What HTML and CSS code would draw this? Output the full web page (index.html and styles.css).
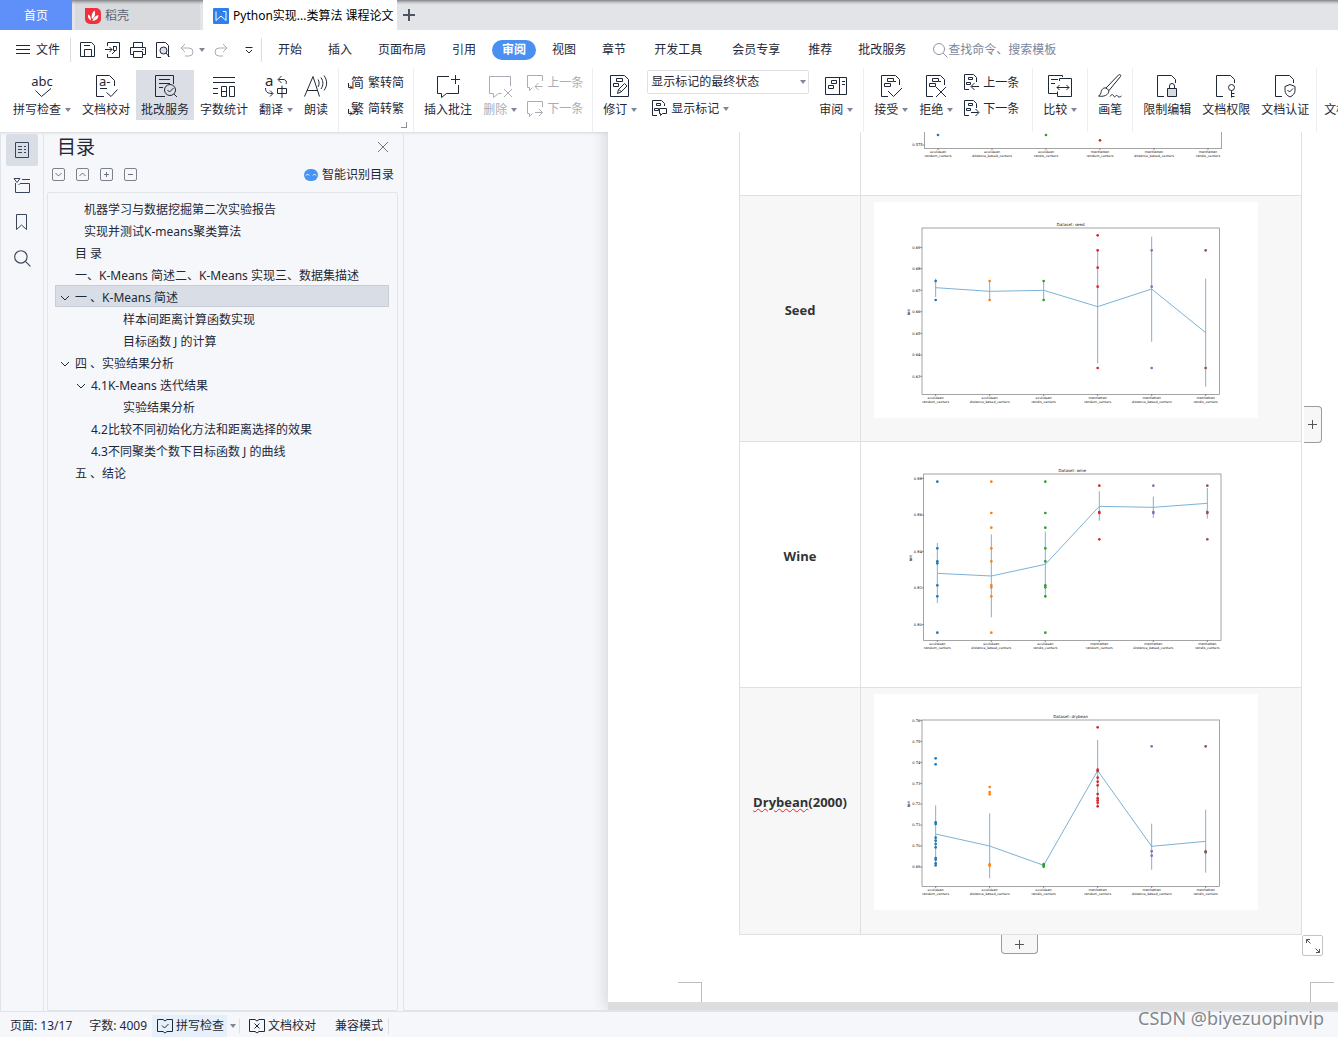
FILE: index.html
```html
<!DOCTYPE html>
<html lang="zh-CN">
<head>
    <meta charset="UTF-8">
    <meta name="viewport" content="width=device-width, initial-scale=1.0">
    <title>Python实现...类算法 课程论文</title>
    <link rel="stylesheet" href="styles.css">
</head>
<body>
    <svg class="sprite" aria-hidden="true">
        <symbol id="caret" viewBox="0 0 6 4"><path d="M0 0h6L3 4z" fill="#7f8796" stroke="none"/></symbol>
        <symbol id="doc" viewBox="0 0 24 24"><path d="M9 22.500H2.500v-21h14l4 4V9"/></symbol>
        <symbol id="doc-marks" viewBox="0 0 24 24"><path d="M9 22.500H2.500v-21h14l4 4V11M8.500 4.500h6v3h-6zM5.500 9.500h6v3h-6zM15 7.500h2"/></symbol>
        <symbol id="doc-small" viewBox="0 0 18 18"><path d="M6 15.500H1.500v-15h9l3 3V8M5.500 3.500h4v2h-4zM3.500 8.500h4v2h-4z"/></symbol>
        <symbol id="arrow-left" viewBox="0 0 18 18"><path d="M16 12.500H8.500M11.500 9l-3.500 3.500 3.500 3.500"/></symbol>
        <symbol id="arrow-right" viewBox="0 0 18 18"><path d="M8 12.500h7.500M12.500 9l3.500 3.500-3.500 3.500"/></symbol>
        <symbol id="chevron" viewBox="0 0 10 10"><path d="M1 3l4 4 4-4"/></symbol>
        <symbol id="magnifier" viewBox="0 0 16 16"><circle cx="7" cy="7" r="5.500"/><path d="M11 11l4.500 4.500"/></symbol>
    </svg>

    <header>
        <nav class="tab-strip" aria-label="文档标签">
            <a href="#" class="tab tab-home">首页</a>
            <a href="#" class="tab tab-docer">
                <svg width="16" height="16" viewBox="0 0 16 16"><path d="M0 0h11a5 5 0 0 1 5 5v6a5 5 0 0 1-5 5H5a5 5 0 0 1-5-5z" fill="#f0303c" stroke="none"/><path d="M9.500 2.500c1.500 3 .5 6.500-2.500 8.500-1-3 0-6.500 2.500-8.500zM3 6.500c2 .5 3 3 3 6C4 11.500 2.500 9.500 3 6.500zM13.500 7c0 3.500-2 5.500-6 6 .5-3 3-5.500 6-6z" fill="#fff" stroke="none"/></svg>
                稻壳
            </a>
            <a href="#" class="tab tab-active">
                <svg width="16" height="16" viewBox="0 0 16 16"><rect width="16" height="16" rx="1" fill="#2f80ea" stroke="none"/><path d="M3 3.500v9l5-4.500 5 4.500v-9h-3" stroke="#fff"/></svg>
                Python实现...类算法 课程论文
            </a>
            <button type="button" class="new-tab" aria-label="新建标签"><svg width="12" height="12" viewBox="0 0 12 12"><path d="M6 0v12M0 6h12" stroke-width="2"/></svg></button>
        </nav>

        <div class="menu-bar">
            <button type="button" class="file-btn">
                <svg width="14" height="12" viewBox="0 0 14 12"><path d="M0 1.500h14M0 5.500h14M0 9.500h14"/></svg>
                文件
            </button>
            <div class="quick-bar">
                <button type="button" aria-label="保存"><svg width="16" height="16" viewBox="0 0 16 16"><path d="M.5.500h11l3 3v11H.5zM4.500 14V7.500h7V14M4 3.500h6"/></svg></button>
                <button type="button" aria-label="输出为PDF"><svg width="16" height="16" viewBox="0 0 16 16"><path d="M2.500 4V.5h12v15h-12V12M0 7.500h7M4.500 5L7 7.500 4.500 10M8 4.500h3.500v3L7 12M8.500 4.500v4h3"/></svg></button>
                <button type="button" aria-label="打印"><svg width="16" height="16" viewBox="0 0 16 16"><path d="M3.500 5V.5h9V5M3 12.500H.5v-7h15v7H13M3.500 9.500h9v6h-9zM12 7.500h1.500"/></svg></button>
                <button type="button" aria-label="打印预览"><svg width="16" height="16" viewBox="0 0 16 16"><path d="M6 15.500H1.500V.5h9l3 3V15"/><circle cx="8.500" cy="8.500" r="3.500" fill="#dde0e6"/><path d="M11 11l3.500 4"/></svg></button>
                <div class="undo">
                    <button type="button" class="off" aria-label="撤销"><svg width="14" height="14" viewBox="0 0 14 14"><path d="M5 1L1 5l4 4M1.500 5H9a4 4 0 0 1 0 8H5"/></svg></button>
                    <button type="button" aria-label="撤销列表"><svg class="caret"><use href="#caret"/></svg></button>
                </div>
                <button type="button" class="off redo" aria-label="恢复"><svg width="14" height="14" viewBox="0 0 14 14"><path d="M9 1l4 4-4 4M12.500 5H5a4 4 0 0 0 0 8h4"/></svg></button>
                <button type="button" aria-label="自定义"><svg width="8" height="8" viewBox="0 0 8 8"><path d="M.5 1.500h7M1 4l3 3 3-3"/></svg></button>
            </div>
            <nav class="menus" aria-label="功能区">
                <a href="#">开始</a>
                <a href="#">插入</a>
                <a href="#">页面布局</a>
                <a href="#">引用</a>
                <a href="#" class="current">审阅</a>
                <a href="#">视图</a>
                <a href="#">章节</a>
                <a href="#" class="roomy">开发工具</a>
                <a href="#" class="roomy">会员专享</a>
                <a href="#">推荐</a>
                <a href="#">批改服务</a>
            </nav>
            <label class="search">
                <svg width="16" height="16"><use href="#magnifier"/></svg>
                <input type="text" placeholder="查找命令、搜索模板" aria-label="查找命令、搜索模板">
            </label>
        </div>

        <div class="ribbon">
            <div class="group">
                <button type="button" class="tool">
                    <svg width="24" height="24" viewBox="0 0 24 24"><text x="12" y="12" font-size="13" text-anchor="middle">abc</text><path d="M5.500 16.500l6 6 9.500-8"/></svg>
                    <span>拼写检查<svg class="caret"><use href="#caret"/></svg></span>
                </button>
                <button type="button" class="tool">
                    <svg width="24" height="24" viewBox="0 0 24 24"><path d="M10 22.500H2.500v-21h13l5 5V12M6 14.500h7M12.500 18.500l4.500 4 6.500-7"/><text x="5" y="12" font-size="13">a-</text></svg>
                    <span>文档校对</span>
                </button>
                <button type="button" class="tool pressed">
                    <svg width="24" height="24" viewBox="0 0 24 24"><path d="M12 22.500H2.500v-21h18V10M6 5.500h11M6 9.500h11M6 13.500h4"/><circle cx="17" cy="16" r="5.500"/><path d="M14.500 16l2 2 4-4M21 20l3 3"/></svg>
                    <span>批改服务</span>
                </button>
                <button type="button" class="tool">
                    <svg width="24" height="24" viewBox="0 0 24 24"><path d="M1 3.500h22M1 8.500h22M1 14.500h5M1 19.500h5M9.500 12.500h5v10h-5zM9.500 17.500h5M17.500 12.500h5v10h-5z"/></svg>
                    <span>字数统计</span>
                </button>
                <button type="button" class="tool">
                    <svg width="24" height="24" viewBox="0 0 24 24"><text x="1" y="12" font-size="15">a</text><path d="M17.500 2l-3.500 3.500L17.500 9M14.500 5.500H19a3 3 0 0 1 3 4.500M1.500 14c0 4 2 5.500 7 5.500M6 16.500l3 3-3 3M13.500 14.500h9v5h-9zM18 11.500V24"/></svg>
                    <span>翻译<svg class="caret"><use href="#caret"/></svg></span>
                </button>
                <button type="button" class="tool">
                    <svg width="24" height="24" viewBox="0 0 24 24"><path d="M.5 22.500L9 2.500l6.500 20M3 16.500h10.500M14 5.500c1.500 2.500 1.500 5 0 7.500M17 3.500c2.500 4 2.500 7.500 0 11.500M20 1.500c3.500 5 3.500 10 0 15"/></svg>
                    <span>朗读</span>
                </button>
            </div>
            <div class="group corner">
                <div class="tool-list">
                    <button type="button" class="tool-small"><svg width="16" height="18" viewBox="0 0 16 18"><text x="3" y="13" font-size="13">简</text><path d="M.5 9v4.500H4M2 11.500l2 2-2 2"/></svg>繁转简</button>
                    <button type="button" class="tool-small"><svg width="16" height="18" viewBox="0 0 16 18"><text x="3" y="13" font-size="13">繁</text><path d="M.5 9v4.500H4M2 11.500l2 2-2 2"/></svg>简转繁</button>
                </div>
            </div>
            <div class="group">
                <button type="button" class="tool">
                    <svg width="24" height="24" viewBox="0 0 24 24"><path d="M13 2.500H1.500v17h4v4l5-4h12V11M19.500 1v9M15 5.500h9"/></svg>
                    <span>插入批注</span>
                </button>
                <button type="button" class="tool off">
                    <svg width="24" height="24" viewBox="0 0 24 24"><path d="M22.500 12V2.500h-21v17h4v4l5-4h3M16 15l8 8M24 15l-8 8"/></svg>
                    <span>删除<svg class="caret"><use href="#caret"/></svg></span>
                </button>
                <div class="tool-list">
                    <button type="button" class="tool-small off"><svg width="16" height="18" viewBox="0 0 16 18"><path d="M15.500 7V1.500H.5v12h2v3l3-3M15.500 12.500H8M11.500 9L8 12.500l3.500 3.500"/></svg>上一条</button>
                    <button type="button" class="tool-small off"><svg width="16" height="18" viewBox="0 0 16 18"><path d="M15.500 7V1.500H.5v12h2v3l3-3M8 12.500h7.500M12 9l3.500 3.500L12 16"/></svg>下一条</button>
                </div>
            </div>
            <div class="group">
                <button type="button" class="tool">
                    <svg width="24" height="24" viewBox="0 0 24 24"><path d="M2.500 1.500h14l4 4v17h-18zM8.500 4.500h6v3h-6zM5.500 9.500h5v3h-5zM9.500 19.500l1-4 6-6 2.500 2.500-6 6zM11 15.500l2.500 2.500"/></svg>
                    <span>修订<svg class="caret"><use href="#caret"/></svg></span>
                </button>
                <div class="tool-list">
                    <div class="picker">
                        <select aria-label="标记显示状态">
                            <option>显示标记的最终状态</option>
                            <option>最终状态</option>
                            <option>原始状态</option>
                        </select>
                        <svg class="caret"><use href="#caret"/></svg>
                    </div>
                    <button type="button" class="tool-small markup"><svg width="16" height="18" viewBox="0 0 16 18"><path d="M6 15.500H1.500v-15h9l3 3V6M5.500 3.500h4v2h-4zM3.500 8.500h4v2h-4zM8.500 8.500h7v5h-4l-2 2v-2h-1z"/></svg>显示标记<svg class="caret"><use href="#caret"/></svg></button>
                </div>
                <button type="button" class="tool">
                    <svg width="24" height="24" viewBox="0 0 24 24"><path d="M1.500 3.500h21v17h-21zM15.500 3.500v17M18 7.500h3M18 10.500h3M7.500 6.500h5v3h-5zM4.500 11.500h5v3h-5z"/></svg>
                    <span>审阅<svg class="caret"><use href="#caret"/></svg></span>
                </button>
            </div>
            <div class="group wide">
                <button type="button" class="tool">
                    <svg width="24" height="24" viewBox="0 0 24 24"><use href="#doc-marks"/><path d="M9 17l5.500 5.500L23 14"/></svg>
                    <span>接受<svg class="caret"><use href="#caret"/></svg></span>
                </button>
                <button type="button" class="tool">
                    <svg width="24" height="24" viewBox="0 0 24 24"><use href="#doc-marks"/><path d="M12 13l10 10M22 13L12 23"/></svg>
                    <span>拒绝<svg class="caret"><use href="#caret"/></svg></span>
                </button>
                <div class="tool-list">
                    <button type="button" class="tool-small"><svg width="16" height="18" viewBox="0 0 16 18"><use href="#doc-small" width="18" height="18"/><use href="#arrow-left" width="18" height="18"/></svg>上一条</button>
                    <button type="button" class="tool-small"><svg width="16" height="18" viewBox="0 0 16 18"><use href="#doc-small" width="18" height="18"/><use href="#arrow-right" width="18" height="18"/></svg>下一条</button>
                </div>
            </div>
            <div class="group">
                <button type="button" class="tool">
                    <svg width="24" height="24" viewBox="0 0 24 24"><path d="M14.500 3V1.500H.5v18h9M3 5.500h7M3 9.500h4M11.500 7V4.500h12v18h-14v-5M9 13.500h12M11.500 11L9 13.500l2.500 2.500M18.500 11l2.500 2.500-2.500 2.500"/></svg>
                    <span>比较<svg class="caret"><use href="#caret"/></svg></span>
                </button>
            </div>
            <div class="group">
                <button type="button" class="tool">
                    <svg width="24" height="24" viewBox="0 0 24 24"><path d="M8 14L20.500 1c1.500-1 3 0 2 1.500L11 16.500zM8 14c-3-.5-4.500 1.500-5 4.500-.3 2-1.500 3-2.500 3.500 5 1 10-.5 10.500-5.500M12 22.500c1.500-2.500 3-2.500 4 0 1 1.500 2.500-3 4 0 1 1 2 .5 3.500-.5"/></svg>
                    <span>画笔</span>
                </button>
            </div>
            <div class="group snug">
                <button type="button" class="tool">
                    <svg width="24" height="24" viewBox="0 0 24 24"><use href="#doc"/><path d="M12.500 14.500h9v8h-9z" fill="#d8dbe2"/><path d="M14.500 14v-2a2.500 2.500 0 0 1 5 0v2"/></svg>
                    <span>限制编辑</span>
                </button>
                <button type="button" class="tool">
                    <svg width="24" height="24" viewBox="0 0 24 24"><use href="#doc"/><circle cx="17.500" cy="13.500" r="3"/><path d="M17.500 16.500v7M17.500 19.500h3M17.500 22.500h3"/></svg>
                    <span>文档权限</span>
                </button>
                <button type="button" class="tool">
                    <svg width="24" height="24" viewBox="0 0 24 24"><use href="#doc"/><path d="M17 10.500l5 2v4c0 3-2 5-5 6.500-3-1.500-5-3.500-5-6.500v-4zM14.500 16l2 2 3.500-3.500"/></svg>
                    <span>文档认证</span>
                </button>
            </div>
            <div class="group">
                <button type="button" class="tool">
                    <svg width="24" height="24"><use href="#doc"/></svg>
                    <span>文档定稿</span>
                </button>
            </div>
        </div>
    </header>

    <main class="workspace">
        <nav class="rail" aria-label="侧边栏">
            <button type="button" class="selected" aria-label="目录"><svg width="16" height="18" viewBox="0 0 16 18"><path d="M1.500 1.500h13v15h-13zM4 5.500h4M4 8.500h4M4 11.500h4M10 5.500h2M10 8.500h2M10 11.500h2"/></svg></button>
            <button type="button" aria-label="章节"><svg width="18" height="18" viewBox="0 0 18 18"><path d="M1 1.500h6L4 5.500zM9 2.500h8M2.500 6v9.500h14v-9H7L5.500 8"/></svg></button>
            <button type="button" aria-label="书签"><svg width="14" height="18" viewBox="0 0 14 18"><path d="M1.500 1.500h10v15l-5-4.500-5 4.500z"/></svg></button>
            <button type="button" aria-label="查找"><svg width="18" height="18"><use href="#magnifier"/></svg></button>
        </nav>

        <aside class="outline">
            <div class="outline-head">
                <h1>目录</h1>
                <button type="button" aria-label="关闭"><svg width="10" height="10" viewBox="0 0 10 10"><path d="M0 0l10 10M10 0L0 10"/></svg></button>
            </div>
            <div class="outline-tools">
                <button type="button" class="box" aria-label="展开"><svg width="9" height="9" viewBox="0 0 9 9"><path d="M1.500 3l3 3 3-3"/></svg></button>
                <button type="button" class="box" aria-label="收起"><svg width="9" height="9" viewBox="0 0 9 9"><path d="M1.500 6l3-3 3 3"/></svg></button>
                <button type="button" class="box" aria-label="增加"><svg width="5" height="5" viewBox="0 0 5 5"><path d="M2.500 0v5M0 2.500h5"/></svg></button>
                <button type="button" class="box" aria-label="减少"><svg width="5" height="5" viewBox="0 0 5 5"><path d="M0 2.500h5"/></svg></button>
                <a href="#" class="smart">
                    <svg width="14" height="12" viewBox="0 0 14 12"><rect width="14" height="12" rx="6" fill="#4795f2" stroke="none"/><path d="M2 6.500l1.500-1.500L5 6.500M9 6.500l1.500-1.500L12 6.500" stroke="#fff"/></svg>
                    智能识别目录
                </a>
            </div>
            <ul class="tree">
                <li class="lead">机器学习与数据挖掘第二次实验报告</li>
                <li class="lead">实现并测试K-means聚类算法</li>
                <li>目 录</li>
                <li>一、K-Means 简述二、K-Means 实现三、数据集描述</li>
                <li class="chosen"><svg><use href="#chevron"/></svg>一 、K-Means 简述</li>
                <li class="level3">样本间距离计算函数实现</li>
                <li class="level3">目标函数 J 的计算</li>
                <li><svg><use href="#chevron"/></svg>四 、实验结果分析</li>
                <li class="level2"><svg><use href="#chevron"/></svg>4.1K-Means 迭代结果</li>
                <li class="level3">实验结果分析</li>
                <li class="level2">4.2比较不同初始化方法和距离选择的效果</li>
                <li class="level2">4.3不同聚类个数下目标函数 J 的曲线</li>
                <li>五 、结论</li>
            </ul>
        </aside>

        <section class="canvas">
            <div class="sheet-stack">
                <article class="sheet">
                    <div class="table-wrap">
                        <table>
                            <tbody>
                                <tr><th scope="row"></th><td><svg class="chart" data-chart="iris"></svg></td></tr>
                                <tr><th scope="row">Seed</th><td><svg class="chart" data-chart="seed"></svg></td></tr>
                                <tr><th scope="row">Wine</th><td><svg class="chart" data-chart="wine"></svg></td></tr>
                                <tr><th scope="row"><span class="misspelled">Drybean</span>(2000)</th><td><svg class="chart" data-chart="drybean"></svg></td></tr>
                            </tbody>
                        </table>
                        <button type="button" class="add-col" aria-label="添加列"><svg width="9" height="9" viewBox="0 0 9 9"><path d="M4.500 0v9M0 4.500h9"/></svg></button>
                        <button type="button" class="add-row" aria-label="添加行"><svg width="9" height="9" viewBox="0 0 9 9"><path d="M4.500 0v9M0 4.500h9"/></svg></button>
                        <button type="button" class="resize" aria-label="调整表格大小"><svg width="14" height="14" viewBox="0 0 14 14"><path d="M.5 4V.5H4M.5.5l4 4M13.500 10v3.500H10M13.500 13.500l-4-4"/></svg></button>
                    </div>
                    <div class="crop-marks"><i></i><i></i></div>
                </article>
            </div>
        </section>
    </main>

    <footer class="status">
        <span class="count">页面: 13/17</span>
        <span class="count">字数: 4009</span>
        <button type="button" class="spell"><svg width="16" height="14" viewBox="0 0 16 14"><path d="M6 .5H.5v12H6l2 1.500 2-1.500h5.500V.5H10L8 2zM5 6.500l2.500 2.500L11.500 5"/></svg>拼写检查</button>
        <button type="button" class="spell-menu" aria-label="拼写检查选项"><svg class="caret"><use href="#caret"/></svg></button>
        <button type="button" class="proof"><svg width="16" height="14" viewBox="0 0 16 14"><path d="M6 .5H.5v12H6l2 1.500 2-1.500h5.500V.5H10L8 2zM5.500 4.500l5 5M10.500 4.500l-5 5"/></svg>文档校对</button>
        <span class="mode">兼容模式</span>
    </footer>
    <div class="watermark">CSDN @biyezuopinvip</div>

    <script src="charts.js"></script>
</body>
</html>
```

FILE: charts.js
```js
// Every chart is drawn on a 1152 x 648 plot, the same shape as the exported figures
const COLORS = ['#1f77b4', '#ff7f0e', '#2ca02c', '#d62728', '#9467bd', '#8c564b'];
const LABELS = [
    ['eculidean', 'random_centers'],
    ['eculidean', 'distance_based_centers'],
    ['eculidean', 'randis_centers'],
    ['manhattan', 'random_centers'],
    ['manhattan', 'distance_based_centers'],
    ['manhattan', 'randis_centers']
];

// ticks: [label, y], mean: line points, bars: error bars, dots: samples per column
const charts = {
    iris: {
        left: 151,
        ticks: [['0.575', 567]],
        mean: [], bars: [],
        dots: [[537], [], [537], [553], [], []]
    },
    seed: {
        left: 144,
        ticks: [['0.69', 136], ['0.68', 200], ['0.67', 265], ['0.66', 329], ['0.65', 394], ['0.64', 459], ['0.63', 523]],
        mean: [257, 268, 265, 314, 261, 392],
        bars: [[230, 285], [238, 292], [238, 292], [145, 484], [104, 419], [230, 554]],
        dots: [[237, 294], [237, 294], [237, 294], [100, 145, 197, 254, 498], [145, 254, 498], [145, 498]]
    },
    wine: {
        left: 149,
        ticks: [['0.88', 91], ['0.86', 201], ['0.84', 311], ['0.82', 420], ['0.80', 530]],
        mean: [376, 384, 349, 175, 178, 166],
        bars: [[285, 465], [259, 508], [251, 449], [130, 218], [146, 210], [120, 212]],
        dots: [
            [101, 301, 340, 346, 412, 445, 554],
            [101, 195, 239, 301, 340, 412, 418, 445, 554],
            [101, 195, 239, 301, 340, 412, 418, 445, 554],
            [113, 192, 195, 274],
            [113, 192, 195],
            [113, 192, 195, 274]
        ]
    },
    drybean: {
        left: 144,
        ticks: [['0.76', 79], ['0.75', 142], ['0.74', 205], ['0.73', 268], ['0.72', 330], ['0.71', 393], ['0.70', 456], ['0.69', 519]],
        mean: [420, 456, 514, 230, 457, 442],
        bars: [[334, 510], [358, 553], [508, 518], [138, 336], [389, 527], [347, 536]],
        dots: [
            [193, 211, 385, 390, 431, 440, 450, 460, 492, 497, 508, 514],
            [279, 294, 301, 511, 515],
            [510, 514, 518],
            [100, 227, 231, 251, 263, 274, 300, 313, 319, 326, 337],
            [157, 472, 485],
            [157, 472, 475]
        ]
    }
};

function drawChart(svg) {
    const name = svg.dataset.chart;
    const chart = charts[name];
    const left = chart.left;
    const x = i => left + 41 + i * 162;
    let out = `<rect class="frame" x="${left}" y="78" width="892" height="499"/>`;

    out += `<text class="title" x="${left + 446}" y="71">Dataset: ${name}</text>`;
    chart.ticks.forEach(([label, y]) => {
        out += `<path class="tick" d="M${left - 5} ${y}h5"/><text class="scale" x="${left - 5}" y="${y + 4}">${label}</text>`;
    });
    out += `<text class="axis" transform="translate(${left - 35} 330) rotate(-90)">NMI</text>`;

    chart.bars.forEach(([top, bottom], i) => {
        out += `<path class="bar" d="M${x(i)} ${top}V${bottom}"/>`;
    });
    if (chart.mean.length) {
        out += `<polyline class="mean" points="${chart.mean.map((y, i) => x(i) + ',' + y).join(' ')}"/>`;
    }
    chart.dots.forEach((column, i) => {
        column.forEach(y => {
            out += `<circle cx="${x(i)}" cy="${y}" r="4" fill="${COLORS[i]}"/>`;
        });
    });
    LABELS.forEach(([metric, method], i) => {
        out += `<path class="tick" d="M${x(i)} 577v5"/>`;
        out += `<text class="label" x="${x(i)}" y="591">${metric}</text><text class="label" x="${x(i)}" y="602">${method}</text>`;
    });

    svg.setAttribute('viewBox', '0 0 1152 648');
    svg.innerHTML = out;
}

document.querySelectorAll('.chart').forEach(drawChart);
```

FILE: styles.css
```css
* {
    box-sizing: border-box;
}
body {
    margin: 0;
    height: 100vh;
    display: flex;
    flex-direction: column;
    overflow: hidden;
    position: relative;
    background: #f5f7fa;
    color: #1f2838;
    font-family: "Noto Sans", "Noto Sans CJK SC", sans-serif;
    font-size: 12px;
    line-height: 16px;
}
button, input, select {
    font: inherit;
    color: inherit;
    border: none;
    background: none;
    padding: 0;
    margin: 0;
}
button {
    display: flex;
    align-items: center;
    justify-content: center;
    white-space: nowrap;
}
a {
    color: inherit;
    text-decoration: none;
}
svg {
    display: block;
    flex: none;
    overflow: visible;
    fill: none;
    stroke: currentColor;
}
svg text {
    fill: currentColor;
    stroke: none;
}
.sprite {
    position: absolute;
    width: 0;
    height: 0;
}
.caret {
    width: 6px;
    height: 4px;
}
.off {
    color: #a9adb5;
}

/* tabs */
.tab-strip {
    display: flex;
    gap: 3px;
    height: 30px;
    background: linear-gradient(#85868a, #cfd0d4 3px, #e3e4e8 5px);
}
.tab {
    display: flex;
    align-items: center;
    gap: 4px;
    padding: 2px 10px 0;
    white-space: nowrap;
}
.tab-home {
    width: 72px;
    justify-content: center;
    background: #5f8ff8;
    color: #fff;
}
.tab-docer {
    width: 125px;
    background: linear-gradient(#85868a, #c5c6ca 3px, #d9dade 5px);
    color: #596273;
}
.tab-active {
    background: #fff;
    padding-right: 3px;
    color: #000;
}
.new-tab {
    padding: 0 3px;
    color: #4b5567;
}

/* menu bar */
.menu-bar {
    display: flex;
    align-items: center;
    height: 38px;
    padding-top: 1px;
    background: #fff;
}
.file-btn {
    height: 24px;
    gap: 6px;
    padding: 0 10px 0 16px;
    border-right: 1px solid #d9dce2;
}
.quick-bar {
    display: flex;
    align-items: center;
    gap: 9px;
    height: 24px;
    padding: 0 8px 0 9px;
    border-right: 1px solid #d9dce2;
}
.undo {
    display: flex;
    align-items: center;
    gap: 5px;
}
.quick-bar .redo {
    padding-right: 8px;
}
.menus {
    display: flex;
    gap: 26px;
    padding: 0 26px 0 16px;
}
.menus a {
    white-space: nowrap;
    line-height: 20px;
}
.menus .roomy {
    padding: 0 2px;
}
.menus .current {
    margin: 0 -10px;
    padding: 0 10px;
    border-radius: 10px;
    background: #4a90f0;
    color: #fff;
    font-weight: bold;
}
.search {
    display: flex;
    align-items: center;
    flex: 1;
    color: #8c96ac;
}
.search input {
    flex: 1;
    min-width: 0;
}
.search input::placeholder {
    color: #7a86a0;
    opacity: 1;
}

/* ribbon */
.ribbon {
    display: flex;
    height: 64px;
    padding-left: 3px;
    overflow: hidden;
    background: #fff;
}
.group {
    display: flex;
    align-items: flex-start;
    gap: 1px;
    flex: none;
    padding: 2px 5px 0;
    border-right: 1px solid #eceef1;
}
.wide {
    padding-right: 9px;
}
.snug {
    padding-right: 2px;
}
.snug + .group {
    padding-left: 2px;
}
.corner {
    position: relative;
}
.corner::after {
    content: "";
    position: absolute;
    right: 6px;
    bottom: 4px;
    width: 5px;
    height: 5px;
    border: solid #8a90a0;
    border-width: 0 1px 1px 0;
}
.tool {
    flex-direction: column;
    gap: 4px;
    height: 50px;
    padding: 2px 5px 0;
}
.tool span {
    display: flex;
    align-items: center;
    gap: 4px;
}
.pressed {
    background: #dbdfe5;
}
.tool-list {
    display: flex;
    flex-direction: column;
    align-items: flex-start;
    gap: 2px;
    padding: 0 4px;
}
.tool-small {
    height: 24px;
    gap: 4px;
    padding-top: 2px;
}
.markup {
    padding-left: 4px;
}
.picker {
    position: relative;
    width: 162px;
}
.picker select {
    width: 100%;
    height: 24px;
    padding: 0 3px;
    border: 1px solid #dfe1e6;
    border-radius: 2px;
    appearance: none;
}
.picker .caret {
    position: absolute;
    right: 3px;
    top: 10px;
    pointer-events: none;
}

/* workspace */
.workspace {
    display: flex;
    flex: 1;
    min-height: 0;
    border-left: 1px solid #e1e4e9;
    box-shadow: inset 0 3px 3px -2px #d4d7dc;
}
.rail {
    display: flex;
    flex-direction: column;
    gap: 4px;
    width: 43px;
    padding: 2px 5px;
    border-right: 1px solid #e1e4e9;
    color: #3a455c;
}
.rail button {
    width: 32px;
    height: 32px;
}
.rail .selected {
    border-radius: 2px;
    background: #d9dee6;
}
.outline {
    display: flex;
    flex-direction: column;
    width: 360px;
    padding: 0 5px 0 3px;
    border-right: 1px solid #e1e4e9;
}
.outline-head {
    display: flex;
    align-items: center;
    justify-content: space-between;
    padding: 0 10px;
    height: 30px;
}
.outline-head h1 {
    margin: 0;
    font-size: 19px;
    font-weight: normal;
    line-height: 28px;
}
.outline-head button {
    color: #6f7889;
}
.outline-tools {
    display: flex;
    align-items: center;
    gap: 11px;
    height: 24px;
    margin-bottom: 6px;
    padding: 0 4px 0 5px;
}
.box {
    width: 13px;
    height: 13px;
    border: 1px solid #7c828c;
    border-radius: 2px;
    color: #6b727e;
}
.smart {
    display: flex;
    align-items: center;
    gap: 4px;
    margin-left: auto;
    padding-top: 1px;
}
.tree {
    flex: 1;
    margin: 0;
    padding: 4px 8px 0 7px;
    border: 1px solid #e1e4e9;
    border-radius: 2px;
    list-style: none;
}
.tree li {
    display: flex;
    align-items: center;
    height: 22px;
    padding: 3px 0 0 20px;
    white-space: pre;
}
.tree svg {
    width: 10px;
    height: 10px;
    margin: 0 5px 0 -15px;
}
.tree .lead {
    padding-left: 29px;
}
.tree .level2 {
    padding-left: 36px;
}
.tree .level3 {
    padding-left: 68px;
}
.tree .chosen {
    background: #d9dee6;
    box-shadow: inset 0 0 0 1px #c6cdd6;
}

/* document */
.canvas {
    display: flex;
    flex: 1;
    flex-direction: column;
    justify-content: flex-end;
    min-width: 0;
    padding-left: 204px;
    overflow: hidden;
    border-bottom: 1px solid #e1e3e7;
}
.sheet-stack {
    width: 795px;
    padding-bottom: 8px;
    background: #dcdddf;
    box-shadow: 0 0 16px #c9cacd;
}
.sheet {
    background: #fff;
    color: #333;
}
.table-wrap {
    position: relative;
    width: 563px;
    margin-left: 131px;
}
table {
    width: 100%;
    table-layout: fixed;
    border-collapse: collapse;
    border: 1px solid #dee0e3;
}
tr {
    height: 246px;
}
tr:last-child {
    height: 247px;
}
tr:nth-child(even) {
    background: #f7f7f7;
}
th, td {
    padding: 0;
    border: 1px solid #dee0e3;
}
th {
    width: 121px;
    padding-bottom: 18px;
    font-family: "Open Sans", "Noto Sans", sans-serif;
    font-size: 13px;
}
td {
    padding: 6px 0 0 13px;
    vertical-align: top;
}
.misspelled {
    text-decoration: underline wavy #e0252b 1px;
    text-underline-offset: 1px;
}
.add-col, .add-row, .resize {
    position: absolute;
    border: 1px solid #9b9b9b;
    background: #f7f7f7;
    color: #555;
}
.add-col {
    left: 565px;
    bottom: 492px;
    width: 18px;
    height: 37px;
    border-left: none;
    border-radius: 0 4px 4px 0;
}
.add-row {
    left: 262px;
    top: 100%;
    width: 37px;
    height: 19px;
    border-top: none;
    border-radius: 0 0 4px 4px;
}
.resize {
    left: 100%;
    top: 100%;
    width: 21px;
    height: 21px;
    border-color: #c4c4c4;
    border-radius: 2px;
    background: #fff;
}
.crop-marks {
    display: flex;
    justify-content: space-between;
    margin-top: 47px;
    padding: 0 69px 0 70px;
}
.crop-marks i {
    width: 24px;
    height: 20px;
    border: solid #bdbdbd;
    border-width: 1px 1px 0 0;
}
.crop-marks i:last-child {
    border-width: 1px 0 0 1px;
}

/* charts */
.chart {
    width: 384px;
    height: 216px;
    background: #fff;
    stroke: none;
    font-family: "DejaVu Sans", sans-serif;
}
.chart .frame {
    stroke: #777;
    stroke-width: 2px;
}
.chart .tick {
    stroke: #555;
    stroke-width: 2px;
}
.chart .mean, .chart .bar {
    stroke: #7db2d6;
    stroke-width: 3px;
}
.chart text {
    fill: #111;
    font-size: 10px;
    text-anchor: middle;
}
.chart .title {
    font-size: 12px;
}
.chart .scale {
    font-size: 11px;
    text-anchor: end;
}

/* status bar */
.status {
    display: flex;
    align-items: center;
    height: 26px;
    padding: 3px 0 0 10px;
    border-top: 1px solid #e1e3e7;
    background: #f5f7fa;
    white-space: nowrap;
}
.count {
    margin-right: 17px;
}
.count + .count {
    margin-right: 5px;
}
.spell, .proof {
    gap: 3px;
    height: 22px;
}
.spell {
    padding: 0 3px 0 5px;
    background: #e6f0fb;
}
.spell-menu {
    height: 14px;
    padding: 0 3px;
    border-right: 1px solid #dcdfe5;
}
.proof {
    padding: 0 9px;
}
.mode {
    padding: 0 5px 0 10px;
    border-right: 1px solid #dcdfe5;
}
.watermark {
    position: absolute;
    right: 14px;
    bottom: 7px;
    color: #85878b;
    font-size: 18px;
    line-height: 24px;
    text-shadow: 1px 1px 0 #fff;
}
```
